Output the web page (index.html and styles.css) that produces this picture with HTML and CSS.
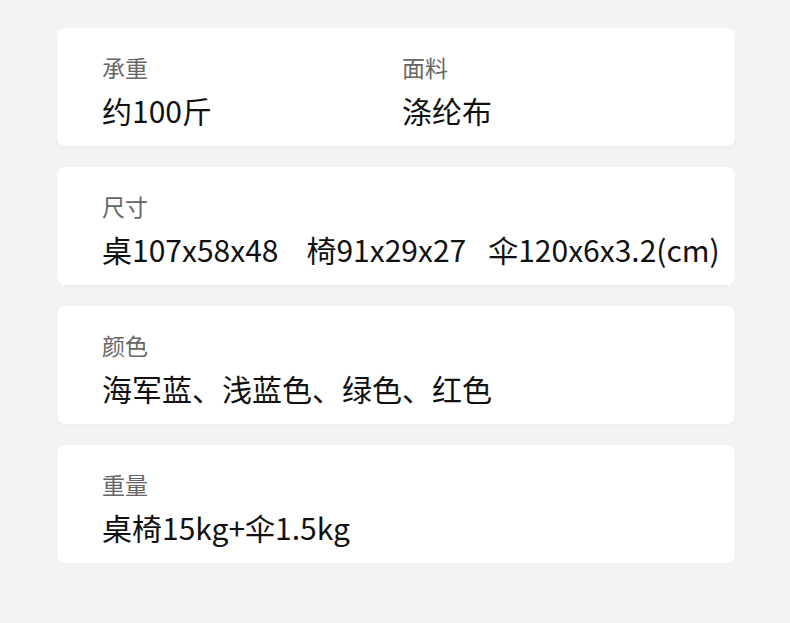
FILE: index.html
```html
<!DOCTYPE html>
<html lang="zh-CN">
<head>
    <meta charset="UTF-8">
    <meta name="viewport" content="width=device-width, initial-scale=1.0">
    <title>产品参数</title>
    <link rel="stylesheet" href="styles.css">
</head>
<body>

<main class="specs">
    <div class="card card-two">
        <div class="item">
            <div class="label">承重</div>
            <div class="value">约100斤</div>
        </div>
        <div class="item">
            <div class="label">面料</div>
            <div class="value">涤纶布</div>
        </div>
    </div>

    <div class="card">
        <div class="item">
            <div class="label">尺寸</div>
            <div class="value">
                <span class="part part-wide">桌107x58x48</span><span class="part">椅91x29x27</span><span>伞120x6x3.2(cm)</span>
            </div>
        </div>
    </div>

    <div class="card">
        <div class="item">
            <div class="label">颜色</div>
            <div class="value">海军蓝、浅蓝色、绿色、红色</div>
        </div>
    </div>

    <div class="card">
        <div class="item">
            <div class="label">重量</div>
            <div class="value">桌椅15kg+伞1.5kg</div>
        </div>
    </div>
</main>

</body>
</html>
```

FILE: styles.css
```css
body {
    margin: 0;
    font-family: "Noto Sans CJK SC", "Noto Sans", sans-serif;
    background-color: #f3f3f3;
}

.specs {
    display: flex;
    flex-direction: column;
    gap: 21px;
    width: 678px;
    margin: 0 0 0 57px;
    padding-top: 28px;
}

.card {
    background: #fff;
    border-radius: 8px;
    height: 118px;
    box-sizing: border-box;
    padding: 24px 45px 0;
    box-shadow: 0 1px 4px rgba(0, 0, 0, 0.03);
}

.card-two {
    display: grid;
    grid-template-columns: 300px 1fr;
}

.label {
    font-size: 23px;
    line-height: 30px;
    color: #666;
}

.value {
    margin-top: 8px;
    font-size: 30px;
    line-height: 40px;
    color: #111;
    white-space: nowrap;
}

.part {
    margin-right: 22px;
}

.part-wide {
    margin-right: 28px;
}
```
